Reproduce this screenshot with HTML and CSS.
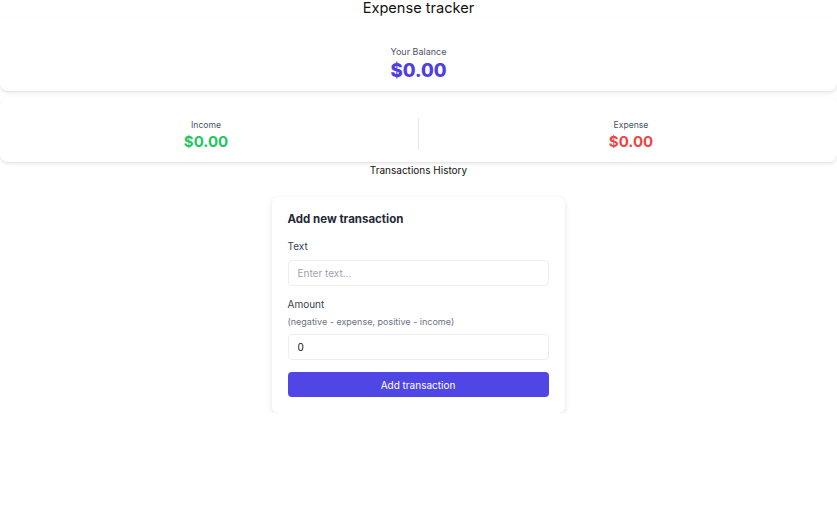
FILE: index.html
```html
<!DOCTYPE html>
<html>
<head>
<meta charset="utf-8">
<link rel="stylesheet" href="styles.css">
</head>
<body>
<h1 class="title">Expense tracker</h1>
<section class="balance-card">
  <div class="balance-label">Your Balance</div>
  <div class="balance-value">$0.00</div>
</section>
<section class="summary-card">
  <div class="summary-col">
    <div class="summary-label">Income</div>
    <div class="summary-value income">$0.00</div>
  </div>
  <div class="summary-divider"></div>
  <div class="summary-col">
    <div class="summary-label">Expense</div>
    <div class="summary-value expense">$0.00</div>
  </div>
</section>
<h2 class="history-title">Transactions History</h2>
<div class="form-wrap">
  <form class="form-card">
    <h3 class="form-title">Add new transaction</h3>
    <label class="field-label">Text</label>
    <input class="field-input" type="text" placeholder="Enter text...">
    <label class="field-label amount-label">Amount</label>
    <div class="field-hint">(negative - expense, positive - income)</div>
    <input class="field-input" type="text" value="0">
    <button type="button" class="submit-btn">Add transaction</button>
  </form>
</div>
</body>
</html>
```
FILE: styles.css
```css
* { box-sizing: border-box; }
body {
  margin: 0;
  font-family: Inter, "Noto Sans", sans-serif;
  background: #fff;
  color: #111;
}
.title {
  margin: 0;
  text-align: center;
  font-size: 14.6px;
  font-weight: 400;
  line-height: 17px;
  color: #111;
}
.balance-card {
  background: #fff;
  border-radius: 0 0 8px 8px;
  box-shadow: 0 2px 4px rgba(0,0,0,0.08), 0 1px 2px rgba(0,0,0,0.05);
  padding: 29px 0 10px;
  text-align: center;
  height: 74px;
}
.balance-label {
  font-size: 9px;
  line-height: 11px;
  color: #4b5563;
}
.balance-value {
  margin-top: 1px;
  font-size: 18.5px;
  font-weight: 800;
  line-height: 24px;
  color: #4f3ee0;
}
.summary-card {
  margin-top: 6px;
  background: #fff;
  border-radius: 8px;
  box-shadow: 0 2px 4px rgba(0,0,0,0.08), 0 1px 2px rgba(0,0,0,0.05);
  display: flex;
  align-items: center;
  height: 65px;
}
.summary-col {
  flex: 1;
  text-align: center;
  padding-top: 11px;
}
.summary-divider {
  width: 1px;
  height: 32px;
  background: #e5e7eb;
  margin: 8px 6px 0;
}
.summary-label {
  font-size: 8.6px;
  line-height: 11px;
  color: #4b5563;
}
.summary-value {
  margin-top: 1px;
  font-size: 15px;
  font-weight: 700;
  line-height: 19px;
}
.income { color: #22c55e; }
.expense { color: #ef4444; }
.history-title {
  margin: 0;
  text-align: center;
  font-size: 10px;
  font-weight: 400;
  line-height: 16px;
  color: #111;
}
.form-wrap {
  display: flex;
  justify-content: center;
  padding: 19px 1px 0 0;
}
.form-card {
  width: 293px;
  background: #fff;
  border-radius: 6px;
  box-shadow: 0 2px 6px rgba(0,0,0,0.1), 0 0 1px rgba(0,0,0,0.05);
  padding: 14px 16px 16px;
  display: flex;
  flex-direction: column;
}
.form-title {
  margin: 0 0 12px;
  font-size: 11.5px;
  font-weight: 700;
  line-height: 16px;
  color: #1f2937;
}
.field-label {
  font-size: 10px;
  line-height: 14px;
  color: #374151;
  margin-bottom: 7px;
}
.amount-label { margin-top: 11px; margin-bottom: 5px; }
.field-hint {
  font-size: 9px;
  line-height: 12px;
  color: #6b7280;
  margin-bottom: 6px;
}
.field-input {
  height: 26px;
  border: 1px solid #eceef1;
  border-radius: 4px;
  padding: 0 9px;
  font-family: inherit;
  font-size: 10px;
  color: #111;
  outline: none;
}
.field-input::placeholder { color: #9ca3af; }
.submit-btn {
  margin-top: 12px;
  height: 25px;
  border: none;
  border-radius: 4px;
  background: #4f46e5;
  color: #fff;
  font-family: inherit;
  font-size: 10px;
  cursor: pointer;
}
```
